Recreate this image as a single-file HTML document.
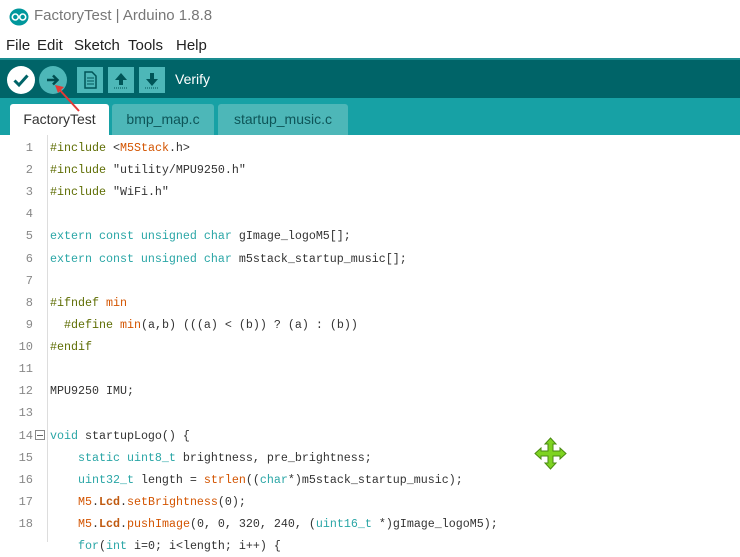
<!DOCTYPE html>
<html><head><meta charset="utf-8"><style>
*{margin:0;padding:0;box-sizing:border-box}
body{width:740px;height:542px;overflow:hidden;background:#fff;position:relative;font-family:"Liberation Sans",sans-serif}
.title{position:absolute;left:0;top:0;width:740px;height:34px;background:#fff}
.title span{position:absolute;left:34px;top:7px;font-size:15px;color:#777}
.menu{position:absolute;left:0;top:34px;height:24px;width:740px;background:#fff;font-size:15px;color:#222}
.menu span{position:absolute;top:3px}
.tb{position:absolute;left:0;top:58px;width:740px;height:40px;background:#006468;border-top:2px solid #1a8c90}
.tabs{position:absolute;left:0;top:98px;width:740px;height:37px;background:#17a1a5}
.tab{position:absolute;top:6px;height:31px;font-size:14px;color:#0e5558;text-align:center;line-height:30px;background:#4db7b8;border-radius:3px 3px 0 0}
.code{position:absolute;left:0;top:135px;width:740px;height:407px;background:#fff}
.gut{position:absolute;left:47px;top:135px;width:1px;height:407px;background:#ddd}
.ln{position:absolute;left:0;width:33px;text-align:right;font-family:"Liberation Mono",monospace;font-size:12px;color:#888;height:22px;line-height:22px}
.l{position:absolute;left:50px;font-family:"Liberation Mono",monospace;font-size:11.67px;color:#333;white-space:pre;height:22px;line-height:22px}
.k{color:#2aa6a6}.o{color:#d35400}.p{color:#5e6d03}.b{font-weight:bold;color:#c05a10}
.btn{position:absolute;top:67px;width:26px;height:26px;background:#4db7b8}
</style></head><body>
<div class="title">
<svg style="position:absolute;left:9px;top:8px" width="20" height="18"><ellipse cx="10" cy="9" rx="9.5" ry="8.5" fill="#00979c"/><circle cx="6.3" cy="9" r="3" fill="none" stroke="#fff" stroke-width="1.6"/><circle cx="13.7" cy="9" r="3" fill="none" stroke="#fff" stroke-width="1.6"/></svg>
<span>FactoryTest | Arduino 1.8.8</span></div>
<div class="menu"><span style="left:6px">File</span><span style="left:37px">Edit</span><span style="left:74px">Sketch</span><span style="left:128px">Tools</span><span style="left:176px">Help</span></div>
<div class="tb"></div>
<svg style="position:absolute;left:6px;top:65px" width="30" height="30"><circle cx="15" cy="15" r="14" fill="#fff"/><path d="M8.5 15.5 L13 20 L21.5 10.5" fill="none" stroke="#006468" stroke-width="3"/></svg>
<svg style="position:absolute;left:38px;top:65px" width="30" height="30"><circle cx="15" cy="15" r="14" fill="#4db7b8"/><path d="M9 15 H19 M15 10.5 L19.5 15 L15 19.5" fill="none" stroke="#004d50" stroke-width="2.5"/></svg>
<div class="btn" style="left:77px"><svg width="26" height="26"><path d="M8 5 H15 L19 9 V21 H8 Z" fill="none" stroke="#005558" stroke-width="1.5"/><path d="M10 11H17M10 14H17M10 17H17" stroke="#005558"/></svg></div>
<div class="btn" style="left:108px"><svg width="26" height="26"><path d="M13 6 L19 13 H15 V18 H11 V13 H7 Z" fill="#005558"/><path d="M6 21H20" stroke="#005558" stroke-dasharray="1 1"/></svg></div>
<div class="btn" style="left:139px"><svg width="26" height="26"><path d="M13 19 L19 12 H15 V6 H11 V12 H7 Z" fill="#005558"/><path d="M6 21H20" stroke="#005558" stroke-dasharray="1 1"/></svg></div>
<div style="position:absolute;left:175px;top:71px;color:#fff;font-size:14px">Verify</div>
<div class="tabs">
<div class="tab" style="left:10px;width:99px;background:#fff;color:#333">FactoryTest</div>
<div class="tab" style="left:112px;width:102px">bmp_map.c</div>
<div class="tab" style="left:218px;width:130px">startup_music.c</div>
</div>
<svg style="position:absolute;left:52px;top:84px" width="30" height="30"><path d="M5 3 L27 27" stroke="#e53935" stroke-width="2"/><path d="M3 1 L12 3 L6 9 Z" fill="#e53935"/></svg>
<div class="code"></div>
<div class="gut"></div>
<div style="position:absolute;left:35px;top:430px;width:10px;height:10px;border:1px solid #888"><div style="position:absolute;left:1px;top:3.5px;width:6px;height:1px;background:#666"></div></div>
<div id="c"></div>
<script>
var L=[
'<span class="p">#include</span> &lt;<span class="o">M5Stack</span>.h&gt;',
'<span class="p">#include</span> "utility/MPU9250.h"',
'<span class="p">#include</span> "WiFi.h"',
'',
'<span class="k">extern const unsigned char</span> gImage_logoM5[];',
'<span class="k">extern const unsigned char</span> m5stack_startup_music[];',
'',
'<span class="p">#ifndef</span> <span class="o">min</span>',
'  <span class="p">#define</span> <span class="o">min</span>(a,b) (((a) &lt; (b)) ? (a) : (b))',
'<span class="p">#endif</span>',
'',
'MPU9250 IMU;',
'',
'<span class="k">void</span> startupLogo() {',
'    <span class="k">static uint8_t</span> brightness, pre_brightness;',
'    <span class="k">uint32_t</span> length = <span class="o">strlen</span>((<span class="k">char</span>*)m5stack_startup_music);',
'    <span class="o">M5</span>.<span class="b">Lcd</span>.<span class="o">setBrightness</span>(0);',
'    <span class="o">M5</span>.<span class="b">Lcd</span>.<span class="o">pushImage</span>(0, 0, 320, 240, (<span class="k">uint16_t</span> *)gImage_logoM5);',
'    <span class="k">for</span>(<span class="k">int</span> i=0; i&lt;length; i++) {'];
var h='';for(var i=0;i<L.length;i++){var t=137+i*22.12;h+='<div class="ln" style="top:'+t+'px">'+(i<18?i+1:'')+'</div><div class="l" style="top:'+t+'px">'+L[i]+'</div>';}
document.getElementById('c').innerHTML=h;
</script>
<svg style="position:absolute;left:534px;top:437px" width="33" height="33" viewBox="0 0 33 33"><path d="M16.5 1 L22 7 H19 V14 H26 V11 L32 16.5 L26 22 V19 H19 V26 H22 L16.5 32 L11 26 H14 V19 H7 V22 L1 16.5 L7 11 V14 H14 V7 H11 Z" fill="#7ed321" stroke="#4a8a12" stroke-width="1"/></svg>
</body></html>
